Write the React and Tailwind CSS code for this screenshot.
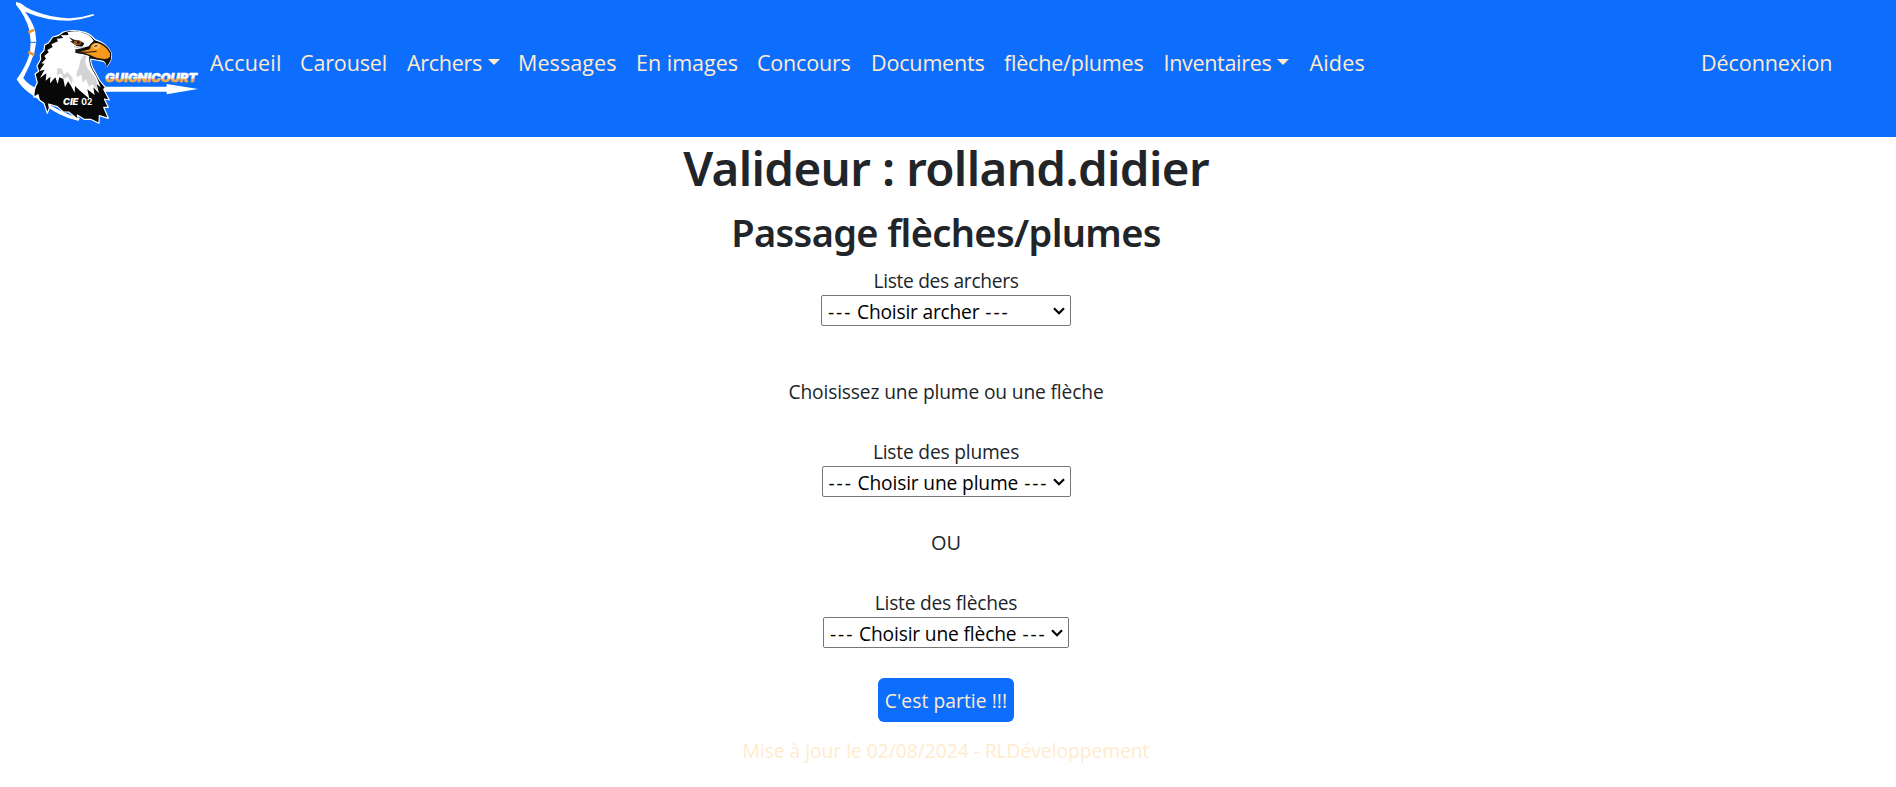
import React from "react";

const Caret = () => (
  <span className="ml-[6px] mb-[2px] self-center border-x-[6px] border-t-[6px] border-x-transparent border-t-[#ffebcd]" />
);

const links = [
  { label: "Accueil", cls: "w-[90px] tracking-[0.17px]" },
  { label: "Carousel", cls: "w-[107px] tracking-[-0.14px]" },
  { label: "Archers", cls: "w-[111px] tracking-[-0.3px]", caret: true },
  { label: "Messages", cls: "w-[118px] tracking-[0.09px]" },
  { label: "En images", cls: "w-[121px]" },
  { label: "Concours", cls: "w-[114px] tracking-[-0.2px]" },
  { label: "Documents", cls: "w-[133px] tracking-[-0.16px]" },
  { label: "flèche/plumes", cls: "w-[159.5px] tracking-[-0.21px]" },
  { label: "Inventaires", cls: "w-[146px] tracking-[-0.32px]", caret: true },
  { label: "Aides", cls: "w-[75px] tracking-[0.17px]" },
];

function Logo() {
  return (
    <svg className="ml-4 h-[128px] w-[184px] shrink-0" viewBox="48 0 552 384">
      <defs>
        <linearGradient id="club" x1="0" y1="0" x2="0" y2="1">
          <stop offset="0.52" stopColor="#fff" />
          <stop offset="0.66" stopColor="#f5ad45" />
        </linearGradient>
      </defs>
      {/* bow */}
      <path fill="#fff" d="M48 6 L62 10 Q78 24 96 31 Q165 58 218 54 Q252 51 280 42 L283 46 Q244 61 206 62 Q137 62 75 35 Q96 62 105 91 L109 124 L103 158 Q91 194 70 234 Q82 253 112 266 L130 300 Q170 334 240 355 L234 362 Q176 350 132 312 Q104 290 88 279 Q64 262 50 238 Q78 199 90 158 L92 124 L88 91 Q78 50 48 14 Z" />
      <path stroke="#0d6efd" strokeWidth="3" d="M91 127H110" />
      <path stroke="#e79a2c" strokeWidth="8" d="M85 98l18-9M85 156l18 9" />
      {/* arrow */}
      <path fill="#fff" d="M308 260H500V252L594 267L500 283V275H308Z" />
      {/* outline and black plumage */}
      <path
        fill="#080808"
        stroke="#fff"
        strokeWidth="3.5"
        strokeLinejoin="round"
        d="M190 96Q215 88 240 94Q270 98 285 119Q318 128 333 158Q339 178 321 198Q318 188 311 184L288 180L272 177Q272 196 284 214L298 240L316 262L311 268L328 300L313 297L325 322L311 322L325 355L298 347L297 370L272 358L252 358L232 345L236 360L206 336L190 336L172 320L146 312L148 324L142 340L132 310L118 300L114 284L102 292Q100 268 112 248L105 222L116 214L111 198L122 178L121 164L132 151L134 135L146 128L158 111L174 107Z"
      />
      {/* white head */}
      <path
        fill="#fff"
        d="M202 97Q228 90 248 98Q272 104 281 122L268 138L229 149L226 158L268 166Q266 190 276 208Q292 231 302 262L290 252L297 280L280 262L284 285L262 268L268 296L240 272L225 258L224 278L212 256L204 244L195 262L190 237L178 232L173 252L166 232L150 250L151 230L137 242L139 220L120 234L134 209L118 213L133 191L124 190L138 176L133 168L146 157L142 150L158 141L154 133L174 124L170 116L190 114L182 106L206 105Z"
      />
      <path fill="#d4d4d6" d="M250 166Q238 182 238 200Q228 216 230 232L244 224L248 248L258 238L268 262L276 252L292 270L290 240Q276 220 262 204Q252 184 260 169Z" />
      <path fill="#d4d4d6" d="M172 204L170 226L184 220L190 238L204 230L216 254L218 234L202 216L192 224L186 206Z" />
      {/* brow and eye */}
      <path fill="#111" d="M206 111L222 119Q240 120 253 130L248 139Q232 142 222 132L210 124L218 123Z" />
      <ellipse cx="232" cy="128" rx="12" ry="7" fill="#9b5617" />
      <circle cx="235" cy="127" r="4" fill="#1a0c04" />
      <path fill="none" stroke="#8a8a8a" strokeWidth="2" d="M222 139Q238 148 252 143" />
      {/* beak */}
      <path
        fill="#f7991c"
        stroke="#111"
        strokeWidth="4"
        d="M228 150Q250 153 268 146Q270 128 289 126Q318 132 331 158Q336 174 321 195Q320 184 308 178Q290 178 268 166Q248 157 229 157Z"
      />
      <path fill="#fbc067" d="M277 137Q286 126 299 133Q304 141 296 146L282 148Z" />
      <path stroke="#111" strokeWidth="3" fill="none" d="M229 154Q262 160 290 154M283 139l9 -2" />
      <path fill="#111" d="M311 178Q325 177 331 170Q331 186 321 196Z" />
      <text
        x="189"
        y="314"
        textLength="46"
        lengthAdjust="spacingAndGlyphs"
        fill="#fff"
        className="font-['Inter',sans-serif] text-[26px] font-black italic"
      >
        CIE
      </text>
      <text
        x="244"
        y="314"
        textLength="33"
        lengthAdjust="spacingAndGlyphs"
        fill="#fff"
        className="font-['Inter',sans-serif] text-[25px] font-bold"
      >
        02
      </text>
      <text
        x="315"
        y="245"
        textLength="276"
        lengthAdjust="spacingAndGlyphs"
        fill="url(#club)"
        stroke="url(#club)"
        strokeWidth="1.5"
        className="font-['Inter',sans-serif] text-[37px] font-black italic"
      >
        GUIGNICOURT
      </text>
    </svg>
  );
}

function Select({ text, cls, textCls }) {
  return (
    <button
      type="button"
      className={`flex h-[31px] items-center justify-between rounded-[2px] border border-[#767676] bg-white pl-[6px] pr-[5px] text-black ${cls}`}
    >
      <span className="mt-[3px] flex leading-[30px]">
        <span className="w-[29px] text-left tracking-[1.9px]">---</span>
        <span className={textCls}>{text}</span>
        <span className="ml-[6px] tracking-[1.9px]">---</span>
      </span>
      <svg className="h-[8px] w-[12px] shrink-0" viewBox="0 0 12 8" fill="none" stroke="#000" strokeWidth="2.2">
        <path d="M1 1.2 6 6.2 11 1.2" />
      </svg>
    </button>
  );
}

export default function App() {
  return (
    <div className="min-h-[787px] bg-white font-['Open_Sans','Noto_Sans',sans-serif] text-[19.2px] leading-[30px] text-[#212529]">
      <nav className="flex h-[137px] items-start bg-[#0d6efd] text-[21.5px] leading-[34px] text-[#ffebcd]">
        <Logo />
        <ul className="mt-[46px] flex pl-[10px]">
          {links.map((l) => (
            <li key={l.label} className={`flex whitespace-nowrap ${l.cls}`}>
              {l.label}
              {l.caret && <Caret />}
            </li>
          ))}
        </ul>
        <a className="ml-auto mr-[65px] mt-[46px] w-[130px] whitespace-nowrap tracking-[-0.07px]">Déconnexion</a>
      </nav>

      <main className="flex w-[1892px] flex-col items-center whitespace-nowrap pt-px">
        <h1 className="font-['Noto_Sans',sans-serif] text-[47.5px] font-semibold leading-[60px] tracking-[-0.63px]">
          Valideur : rolland.didier
        </h1>
        <h2 className="mt-[10px] font-['Noto_Sans',sans-serif] text-[38px] font-semibold leading-[48px] tracking-[-0.65px]">
          Passage flèches/plumes
        </h2>
        <label className="mt-[10px] tracking-[-0.32px]">Liste des archers</label>
        <Select text="Choisir archer" cls="-mt-px w-[250px]" textCls="tracking-[-0.2px]" />
        <p className="mt-[51px] tracking-[-0.14px]">Choisissez une plume ou une flèche</p>
        <label className="mt-[30px] tracking-[-0.19px]">Liste des plumes</label>
        <Select text="Choisir une plume" cls="-mt-px w-[249px]" textCls="tracking-[-0.15px]" />
        <p className="mt-[31px] text-[20px]">OU</p>
        <label className="mt-[30px] tracking-[-0.22px]">Liste des flèches</label>
        <Select text="Choisir une flèche" cls="-mt-px w-[246px]" textCls="tracking-[-0.15px]" />
        <button
          type="button"
          className="mt-[30px] h-[44px] w-[136px] rounded-[6px] bg-[#0d6efd] pt-[2px] tracking-[0.09px] text-[#ffebcd]"
        >
          C'est partie !!!
        </button>
        <footer className="mt-[14px] text-[#ffebcd]">
          Mise à jour le 02/08/2024 - RLDéveloppement
        </footer>
      </main>
    </div>
  );
}
